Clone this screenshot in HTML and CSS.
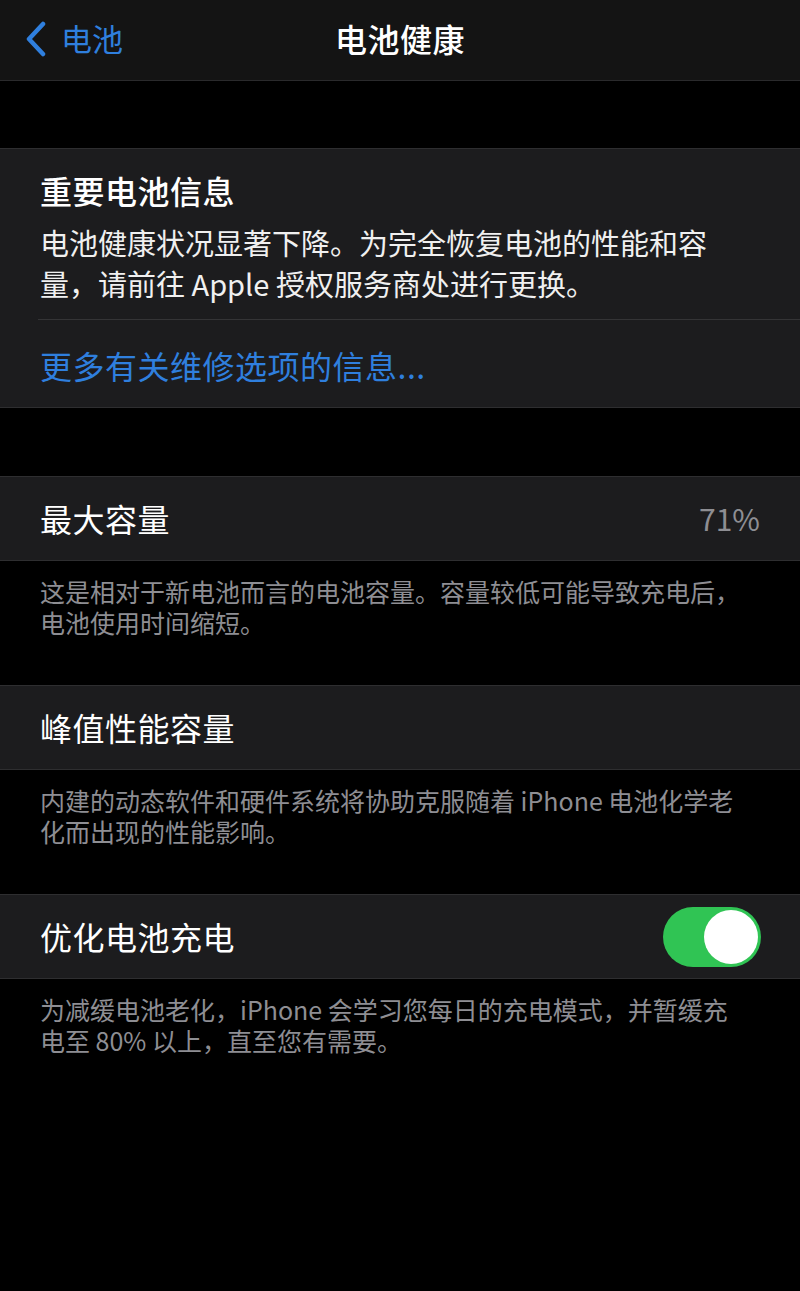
FILE: index.html
```html
<!DOCTYPE html>
<html lang="zh-CN">
<head>
<meta charset="utf-8">
<title>电池健康</title>
<link rel="stylesheet" href="styles.css">
</head>
<body>
<div class="screen">
  <header class="nav">
    <div class="back">
      <svg class="chev" width="24" height="36" viewBox="0 0 24 36"><path d="M19 3 L5 18 L19 33" fill="none" stroke="#2f7fde" stroke-width="4.5" stroke-linecap="round" stroke-linejoin="round"/></svg>
      <span class="back-label">电池</span>
    </div>
    <div class="nav-title">电池健康</div>
  </header>

  <div class="gap-top"></div>

  <section class="group info">
    <div class="info-title">重要电池信息</div>
    <div class="info-body">电池健康状况显著下降。为完全恢复电池的性能和容量，请前往 Apple 授权服务商处进行更换。</div>
    <div class="inner-sep"></div>
    <div class="link">更多有关维修选项的信息...</div>
  </section>

  <div class="gap-mid"></div>

  <section class="group row">
    <span class="row-label">最大容量</span>
    <span class="row-value">71%</span>
  </section>
  <p class="footer">这是相对于新电池而言的电池容量。容量较低可能导致充电后，电池使用时间缩短。</p>

  <section class="group row">
    <span class="row-label">峰值性能容量</span>
  </section>
  <p class="footer">内建的动态软件和硬件系统将协助克服随着 iPhone 电池化学老化而出现的性能影响。</p>

  <section class="group row">
    <span class="row-label">优化电池充电</span>
    <span class="toggle"><span class="knob"></span></span>
  </section>
  <p class="footer">为减缓电池老化，iPhone 会学习您每日的充电模式，并暂缓充电至 80% 以上，直至您有需要。</p>
</div>
</body>
</html>
```

FILE: styles.css
```css
html, body {
  margin: 0;
  padding: 0;
  background: #000;
}
body {
  font-family: "Noto Sans CJK SC", "Noto Sans", "Liberation Sans", sans-serif;
  color: #fff;
}
.screen {
  width: 800px;
  min-height: 1291px;
  background: #000;
}
.nav {
  height: 80px;
  background: #141414;
  border-bottom: 1px solid #2a2a2c;
  display: flex;
  align-items: center;
  justify-content: center;
  position: relative;
}
.back {
  position: absolute;
  left: 24px;
  top: 0;
  height: 80px;
  display: flex;
  align-items: center;
  gap: 13px;
}
.chev {
  display: block;
  margin-top: -2px;
}
.back-label {
  color: #2f7fde;
  font-size: 31px;
  line-height: 40px;
  margin-top: -4px;
}
.nav-title {
  font-size: 32px;
  font-weight: 500;
  line-height: 40px;
  margin-top: -4px;
  letter-spacing: 0.5px;
}
.gap-top {
  height: 67px;
}
.gap-mid {
  height: 68px;
}
.group {
  background: #1c1c1e;
  border-top: 1px solid #2e2e30;
  border-bottom: 1px solid #2e2e30;
}
.info {
  padding: 21px 0 22px 40px;
}
.info-title {
  font-size: 32px;
  font-weight: 500;
  line-height: 40px;
  letter-spacing: 0.5px;
}
.info-body {
  margin-top: 12px;
  font-size: 29px;
  line-height: 41px;
  padding-right: 70px;
  color: #f0f0f0;
}
.inner-sep {
  margin-top: 15px;
  margin-left: -2px;
  height: 1px;
  background: #343436;
}
.link {
  margin-top: 25px;
  color: #2f7fde;
  font-size: 32px;
  line-height: 40px;
  letter-spacing: 0.5px;
}
.row {
  height: 83px;
  padding: 0 40px;
  display: flex;
  align-items: center;
  justify-content: space-between;
}
.row-label {
  font-size: 32px;
  line-height: 40px;
  letter-spacing: 0.5px;
  margin-top: -2px;
}
.row-value {
  font-size: 30px;
  color: #8e8e93;
  line-height: 40px;
  margin-top: -2px;
}
.toggle {
  width: 98px;
  height: 60px;
  border-radius: 30px;
  background: #30c454;
  display: flex;
  align-items: center;
  justify-content: flex-end;
  padding-right: 3px;
  box-sizing: border-box;
  margin-right: -1px;
}
.knob {
  width: 54px;
  height: 54px;
  border-radius: 50%;
  background: #fff;
}
.footer {
  margin: 0 0 47px 0;
  padding: 15px 50px 0 40px;
  font-size: 25px;
  line-height: 31px;
  color: #8e8e93;
}
```
